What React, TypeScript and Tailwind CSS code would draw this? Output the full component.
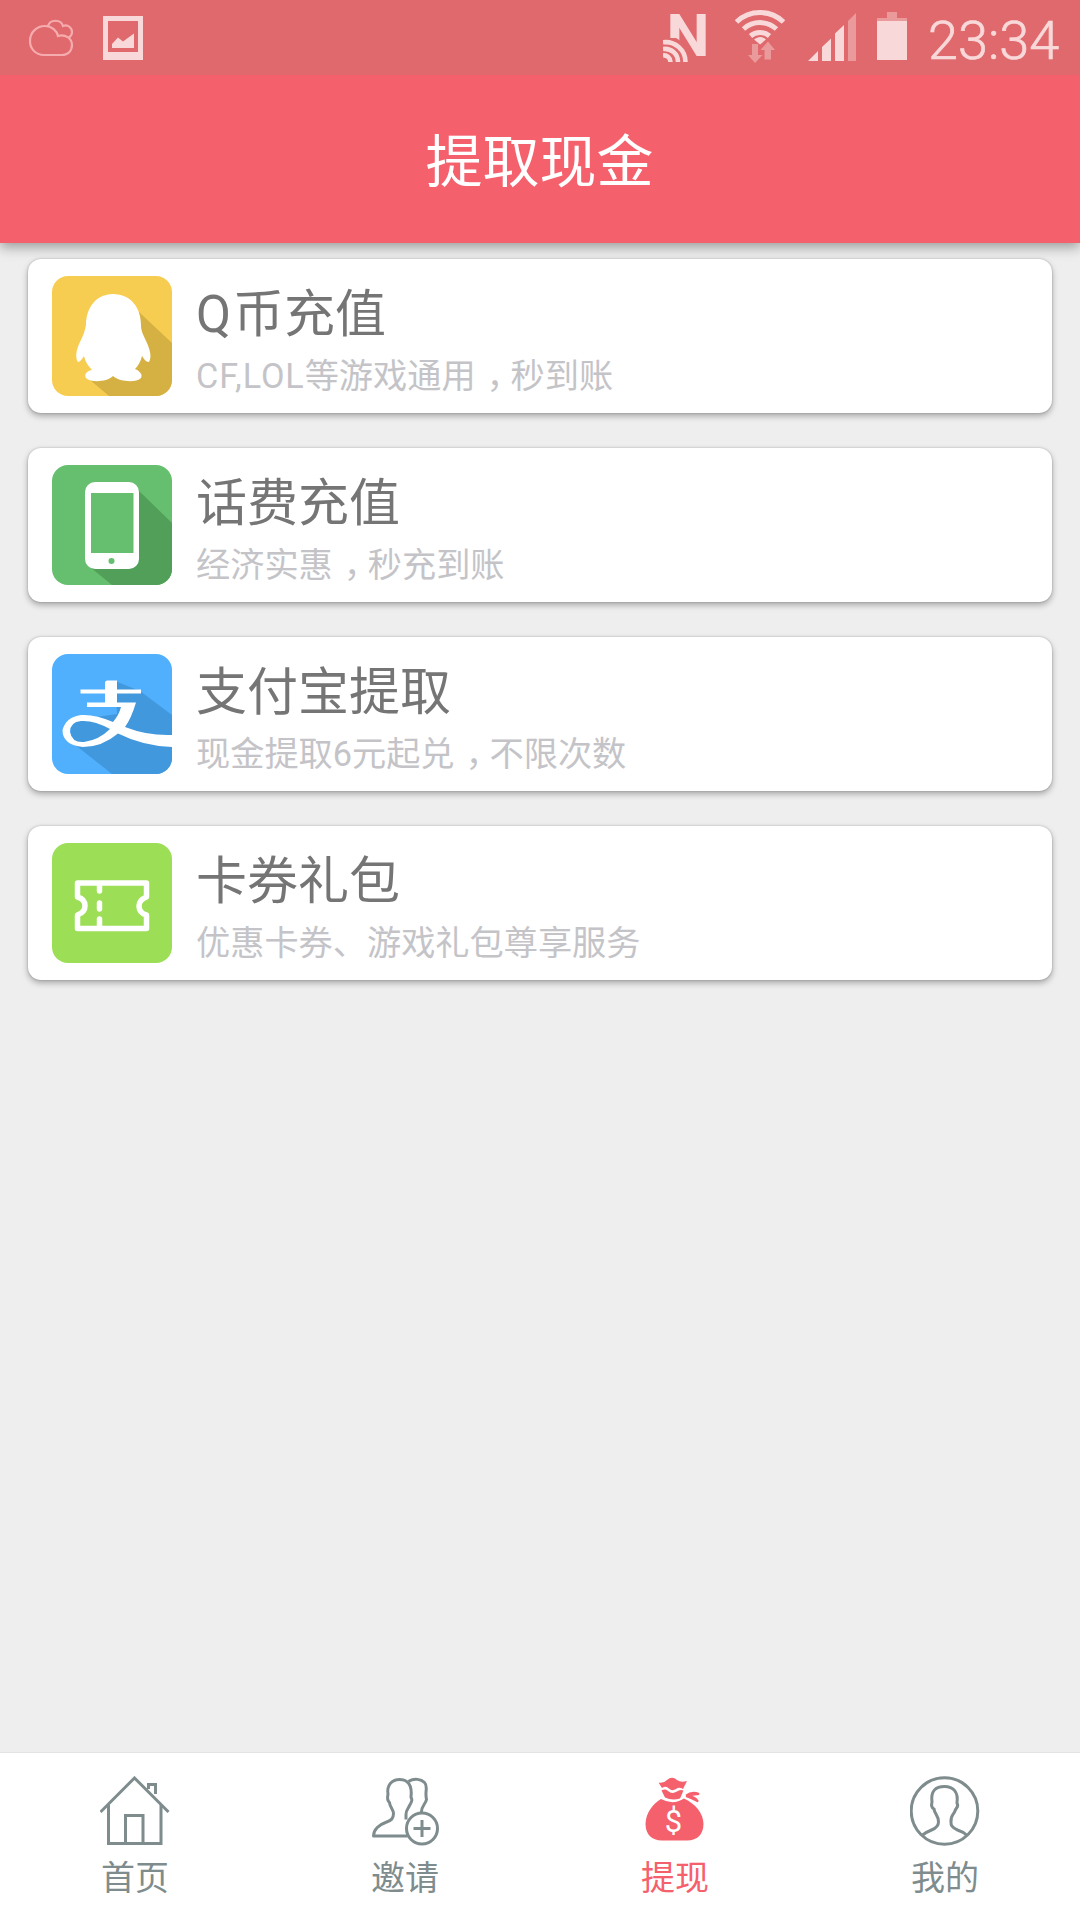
import type { ReactNode } from "react";
import clsx from "clsx";

function CloudIcon() {
  return (
    <svg width="46" height="38" viewBox="0 0 46 38" fill="none" stroke="#f6acae" strokeWidth="2.200">
      <path d="M16 36C7 36 2 29 2 22C2 13 9 7 17 7C24 7 29 12 30 17C37 15 44 19 44 26C44 32 40 36 34 36Z" />
      <path d="M20 7C22 0 33 0 35 7C40 5 44 9 44 13C44 16 42 18 40 19" />
    </svg>
  );
}

function PictureIcon() {
  return (
    <svg width="40" height="44" viewBox="0 0 40 44" fill="#f8d8d9">
      <path fillRule="evenodd" d="M0 0H40V44H0ZM5 5V36H35V5Z" />
      <path d="M9 32V28L15 21.500L20 25.500L31 17.500V32Z" />
    </svg>
  );
}

function NfcIcon() {
  return (
    <svg width="50" height="72" viewBox="0 -11 50 72">
      <text
        x="3.500"
        y="44.500"
        fontSize="60"
        fontWeight="700"
        fontFamily="Roboto, sans-serif"
        fill="#f8d8d9"
        textLength="43"
        lengthAdjust="spacingAndGlyphs"
      >
        N
      </text>
      <path d="M0 27H13A28 28 0 0 1 28 51H0Z" fill="#df696c" />
      <g fill="none" stroke="#f8d8d9" strokeWidth="4.600">
        <path d="M0 31.300A20 20 0 0 1 22.500 51" />
        <path d="M0 38A13 13 0 0 1 15 51" />
        <path d="M0 44.500A6.500 6.500 0 0 1 7.500 51" />
      </g>
    </svg>
  );
}

function WifiIcon() {
  return (
    <svg width="50" height="54" viewBox="0 0 50 54" fill="none" stroke="#f8d8d9" strokeWidth="5">
      <path d="M1.500 12A34 34 0 0 1 48.500 12" />
      <path d="M8.500 19A24.500 24.500 0 0 1 41.500 19" />
      <path d="M15.500 26A14.500 14.500 0 0 1 34.500 26" />
      <path d="M19 29.500Q25 24.500 31 29.500L25 34.500Z" fill="#f8d8d9" stroke="none" />
      <path
        d="M17 34H23V45H27.500L20 53L13 45H17ZM29.500 49.500V40H25.500L33 31.500L40 40H36V49.500Z"
        fill="#eb9a9c"
        stroke="none"
      />
    </svg>
  );
}

function SignalIcon() {
  return (
    <svg width="48" height="48" viewBox="0 0 48 48" fill="#f8d8d9">
      <path d="M0 48L10 38V48ZM14 34L23 25.500V48H14ZM27 20.500L36 12V48H27Z" />
      <path d="M40 8L48 0V48H40Z" fill="#eb9a9c" />
    </svg>
  );
}

function BatteryIcon() {
  return (
    <svg width="30" height="48" viewBox="0 0 30 48">
      <path d="M10 0H20V6H30V9H0V6H10Z" fill="#eb9a9c" />
      <path d="M0 9H30V48H0Z" fill="#f8d8d9" />
    </svg>
  );
}

function QqIcon() {
  return (
    <svg width="120" height="120" viewBox="0 0 120 120" className="rounded-[16px] bg-[#f7cd51]">
      <path d="M87 36L120 67V120H57L38 104L60 60Z" fill="#d5b042" />
      <path
        d="M61 18C44 18 34 32 34 49C33 55 31 60 28 66C24 74 23 82 26 86C28 86 30 83 32 80C33 85 36 90 40 94C34 95 32 99 34 102C39 107 55 106 61 100C68 106 84 107 89 102C91 99 88 95 83 93C86 90 89 85 90 80C92 83 94 86 97 86C100 81 98 74 95 67C92 60 89 56 89 49C89 32 79 18 61 18Z"
        fill="#fff"
      />
    </svg>
  );
}

function PhoneIcon() {
  return (
    <svg width="120" height="120" viewBox="0 0 120 120" className="rounded-[16px] bg-[#66bf6e]">
      <path d="M85 24L120 58V120H60L38 102Z" fill="#519f58" />
      <rect x="33" y="17" width="54" height="87" rx="10" fill="#fff" />
      <path d="M39 28H81.500V88H39Z" fill="#66bf6e" />
      <circle cx="59.500" cy="96" r="3" fill="#66bf6e" />
    </svg>
  );
}

function AlipayIcon() {
  return (
    <svg width="120" height="120" viewBox="0 0 120 120" className="rounded-[16px] bg-[#50b0fe]">
      <path d="M63 27L88 37L120 61V120H60L22 90Q14 72 24 66L65 60Z" fill="#4298dd" />
      <g fill="#fff" fillRule="evenodd">
        <path d="M53 29Q53 26.500 55.500 26.500H65V35.500H89V39.500H65V48.500H84Q79 65 73 73Q96 82 120 81V93Q91 92 66 79.500Q50 93 31 93Q10.500 91 10.500 76Q14 63 29 61Q43 60 61 68Q67 61 69 53H35V48.500H53V39.500H28.500V35.500H53ZM58 75Q42 66 29 67Q18 68 18 78Q20 89 32 88Q47 86 58 75Z" />
      </g>
    </svg>
  );
}

function TicketIcon() {
  return (
    <svg
      width="120"
      height="120"
      viewBox="0 0 120 120"
      fill="none"
      stroke="#fff"
      strokeWidth="5.500"
      className="rounded-[16px] bg-[#9cde56]"
    >
      <path
        d="M25.500 40H94.500V54Q87 57 87 63Q87 70 94.500 72V85.500H25.500V72Q33 69 33 63Q33 56 25.500 54Z"
        strokeLinejoin="round"
      />
      <path d="M47.500 41V48M47.500 60V66M47.500 76V84" strokeLinecap="round" />
    </svg>
  );
}

function HomeIcon() {
  return (
    <svg width="70" height="70" viewBox="0.500 0 70 70" fill="none" stroke="currentColor" strokeWidth="3">
      <path d="M1 36L35 2L69 36" />
      <path d="M9 29V67.500H61.500V29M26 67V39.500H43.500V67" />
      <path d="M49 13V8.500H56V18" />
    </svg>
  );
}

function InviteIcon() {
  return (
    <svg width="70" height="70" viewBox="-1.500 0.500 70 70" fill="none" stroke="currentColor" strokeWidth="3">
      <path
        d="M36 60.500H2C2 54 8 49 14 47C20 45 22 43 22 38C22 34 18 31 18 27C15 24 16 21 16.500 19C15 10 20 4 28 4C36 4 41 9 39.500 22C42 25 39 28 38 30C37 33 34 35 34.500 39V44"
        strokeLinejoin="round"
      />
      <path d="M37 6C43 2 50 4 53 7C57 11 53 16 55 24C54 29 49 31 50 38" />
      <circle cx="50.500" cy="53" r="15.500" />
      <path d="M50.500 44.500V61.500M42 53H59" />
    </svg>
  );
}

function MoneyBagIcon() {
  return (
    <svg width="70" height="70" viewBox="0 0 70 70" fill="currentColor">
      <path d="M18.500 6.500Q24 7.500 27 4Q32 -0.500 37 4Q41 7 47 5L43 13Q39 10.500 36 13Q32 15.500 29 12.500Q26 9.500 22 12Z" />
      <path d="M21.500 14.500Q25 12.500 28 15Q32 18.500 37 15.500Q40 13 43.500 14.500L40 22.500Q32 25 25 21.500Z" />
      <path d="M21 23Q33 29.500 44 22.500C56 28 63.500 38 63.500 48Q63 64 47 64.500H22Q6 64 5.500 48C6 36 13 28 21 23Z" />
      <path d="M46 19.500Q52 15 59 18Q52 18.500 48 20Q55 20.500 58 25.500Q52 22 46 20" fill="none" stroke="currentColor" strokeWidth="2" />
      <text
        x="33.500"
        y="55.500"
        fill="#fff"
        fontSize="31"
        fontFamily="Roboto, sans-serif"
        textAnchor="middle"
      >
        $
      </text>
    </svg>
  );
}

function ProfileIcon() {
  return (
    <svg width="70" height="70" viewBox="0.500 0 70 70" fill="none" stroke="currentColor" strokeWidth="3">
      <circle cx="35" cy="35" r="33.300" />
      <path d="M13 59Q17 56 22 54C27 52 29 50 29 46C29 39 25 38 24.500 33C21 31 22 28 22.500 26C21 15 26 10.500 35 10.500C44 10.500 49 16 47.500 27C50 31 46 32 45.500 35C44 39 41 39 41.500 46C41 50 43 52 48 54Q54 56 57 59" />
    </svg>
  );
}

// half-width comma glyph centred in a full-width cell
function Comma() {
  return (
    <span className="inline-block w-[35px] pl-[4px] text-center [font-feature-settings:'halt']">，</span>
  );
}

interface Option {
  title: ReactNode;
  desc: ReactNode;
  icon: ReactNode;
}

const options: Option[] = [
  {
    title: <><span className="tracking-[2px]">Q</span>币充值</>,
    desc: <><span className="tracking-[0.9px]">CF,LOL</span>等游戏通用<Comma />秒到账</>,
    icon: <QqIcon />,
  },
  { title: "话费充值", desc: <>经济实惠<Comma />秒充到账</>, icon: <PhoneIcon /> },
  { title: "支付宝提取", desc: <>现金提取6元起兑<Comma />不限次数</>, icon: <AlipayIcon /> },
  { title: "卡券礼包", desc: "优惠卡券、游戏礼包尊享服务", icon: <TicketIcon /> },
];

const tabs = [
  { label: "首页", icon: <HomeIcon /> },
  { label: "邀请", icon: <InviteIcon /> },
  { label: "提现", icon: <MoneyBagIcon />, active: true },
  { label: "我的", icon: <ProfileIcon /> },
];

export default function App() {
  return (
    <div className="flex h-[1920px] w-[1080px] flex-col overflow-hidden bg-[#eeeeee] font-['Roboto','Noto_Sans_CJK_SC',sans-serif]">
      <div className="z-10 flex h-[75px] shrink-0 items-start bg-[#df696c] pl-[28px] pr-[20px]">
        <div className="pt-[19px]">
          <CloudIcon />
        </div>
        <div className="ml-[29px] pt-[16px]">
          <PictureIcon />
        </div>
        <div className="ml-auto">
          <NfcIcon />
        </div>
        <div className="ml-[22px] pt-[10px]">
          <WifiIcon />
        </div>
        <div className="ml-[23px] pt-[13px]">
          <SignalIcon />
        </div>
        <div className="ml-[21px] pt-[12px]">
          <BatteryIcon />
        </div>
        <span className="ml-[21px] w-[132px] whitespace-nowrap pt-[10px] text-[54px] font-light leading-[62px] text-[#f8d8d9] [-webkit-text-stroke:0.7px_#f8d8d9]">
          23:34
        </span>
      </div>

      <header className="flex h-[168px] shrink-0 items-center justify-center bg-[#f5606d] pt-[7px] pr-[1px] shadow-[0_4px_12px_rgba(0,0,0,0.36)]">
        <h1 className="text-[57px] leading-[84px] text-white">提取现金</h1>
      </header>

      <main className="flex flex-1 flex-col gap-[35px] px-[28px] pt-[16px]">
        {options.map((option, i) => (
          <div
            key={i}
            className="flex h-[154px] items-center gap-6 rounded-[13px] bg-white pl-6 shadow-[0_3px_6px_rgba(0,0,0,0.3),0_0_2px_rgba(0,0,0,0.25)]"
          >
            {option.icon}
            <div className="whitespace-nowrap pt-[14px]">
              <h2 className="text-[51px] leading-[66px] text-[#757575]">{option.title}</h2>
              <p className="text-[34.200px] leading-[56px] text-[#c4c4c8]">{option.desc}</p>
            </div>
          </div>
        ))}
      </main>

      <nav className="flex h-[168px] shrink-0 border-t border-[#e4e4e4] bg-white">
        {tabs.map((tab) => (
          <div
            key={tab.label}
            className={clsx(
              "flex flex-1 flex-col items-center pt-[23px]",
              tab.active ? "text-[#f5606d]" : "text-[#7f8c8d]",
            )}
          >
            {tab.icon}
            <span className="mt-[7px] text-[34px] leading-[50px]">{tab.label}</span>
          </div>
        ))}
      </nav>
    </div>
  );
}
